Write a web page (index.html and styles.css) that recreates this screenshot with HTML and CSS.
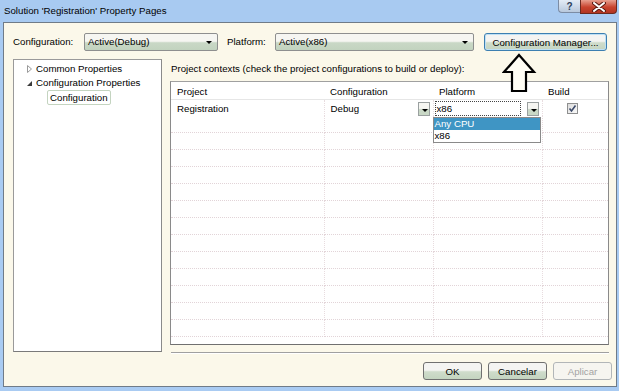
FILE: index.html
```html
<!DOCTYPE html>
<html>
<head>
    <title>Solution 'Registration' Property Pages</title>
    <link rel="stylesheet" href="styles.css">
</head>
<body>
<div class="window">
    <div class="titlebar">
        <span class="title">Solution 'Registration' Property Pages</span>
        <div class="caption-btns">
            <span class="cap help">?</span>
            <span class="cap close">
                <svg width="14" height="10" viewBox="0 0 14 10">
                    <path d="M2 1 L12 9 M12 1 L2 9" stroke="#5a1a12" stroke-width="4" stroke-linecap="round"/>
                    <path d="M2 1 L12 9 M12 1 L2 9" stroke="#fff" stroke-width="2" stroke-linecap="round"/>
                </svg>
            </span>
        </div>
    </div>

    <div class="client">
        <div class="toolbar">
            <span class="lbl lbl-config">Configuration:</span>
            <div class="combo combo-config">Active(Debug)<span class="caret"></span></div>
            <span class="lbl lbl-platform">Platform:</span>
            <div class="combo combo-platform">Active(x86)<span class="caret"></span></div>
            <button type="button" class="btn btn-manager">Configuration Manager...</button>
        </div>

        <div class="main">
            <div class="tree">
                <div class="node">
                    <span class="tw"><svg width="5" height="8" viewBox="0 0 5 8"><path d="M0.5 0.5 L4.5 4 L0.5 7.5 Z" fill="#fff" stroke="#9a9a9a" stroke-width="1"/></svg></span>Common Properties
                </div>
                <div class="node">
                    <span class="tw"><svg width="5" height="5" viewBox="0 0 5 5"><path d="M5 0 L5 5 L0 5 Z" fill="#3a3a3a"/></svg></span>Configuration Properties
                </div>
                <div class="node child"><span class="sel">Configuration</span></div>
            </div>

            <div class="pane">
                <div class="caption">Project contexts (check the project configurations to build or deploy):</div>
                <div class="grid-box">
                    <table class="grid">
                        <tr class="head">
                            <th class="c-proj">Project</th>
                            <th class="c-conf">Configuration</th>
                            <th class="c-plat">Platform</th>
                            <th class="c-build">Build</th>
                        </tr>
                        <tr class="edit">
                            <td>Registration</td>
                            <td><div class="cell-combo">Debug<span class="drop-btn"></span></div></td>
                            <td class="plat-cell">
                                <div class="cell-combo"><span class="focus-box">x86</span><span class="drop-btn"></span></div>
                                <div class="drop-list">
                                    <div class="opt active">Any CPU</div>
                                    <div class="opt">x86</div>
                                </div>
                            </td>
                            <td class="build-cell"><span class="check">
                                <svg width="9" height="9" viewBox="0 0 9 9"><path d="M1.5 4.5 L3.5 7 L7.5 1.5" fill="none" stroke="#3c4a6a" stroke-width="1.6"/></svg>
                            </span></td>
                        </tr>
                        <tr><td></td><td></td><td></td><td></td></tr>
                        <tr><td></td><td></td><td></td><td></td></tr>
                        <tr><td></td><td></td><td></td><td></td></tr>
                        <tr><td></td><td></td><td></td><td></td></tr>
                        <tr><td></td><td></td><td></td><td></td></tr>
                        <tr><td></td><td></td><td></td><td></td></tr>
                        <tr><td></td><td></td><td></td><td></td></tr>
                        <tr><td></td><td></td><td></td><td></td></tr>
                        <tr><td></td><td></td><td></td><td></td></tr>
                        <tr><td></td><td></td><td></td><td></td></tr>
                        <tr><td></td><td></td><td></td><td></td></tr>
                        <tr><td></td><td></td><td></td><td></td></tr>
                        <tr><td></td><td></td><td></td><td></td></tr>
                    </table>
                </div>
                <div class="sep"></div>
            </div>
        </div>

        <div class="footer">
            <button type="button" class="btn btn-dlg">OK</button>
            <button type="button" class="btn btn-dlg">Cancelar</button>
            <button type="button" class="btn btn-dlg disabled">Aplicar</button>
        </div>

        <svg class="pointer" width="36" height="42" viewBox="0 0 36 42">
            <path d="M17 2 L32 19 L24 19 L24 38 L10 38 L10 19 L2 19 Z" fill="#fffdf4" stroke="#000" stroke-width="2.2" stroke-linejoin="miter"/>
        </svg>
    </div>
</div>
</body>
</html>
```

FILE: styles.css
```css
body { margin: 0; background: #a9cbf2; font-family: "Liberation Sans", Arial, sans-serif; font-size: 9.7px; color: #000; }
.window { width: 619px; height: 391px; display: flex; flex-direction: column; }

/* title bar */
.titlebar { height: 22px; display: flex; justify-content: space-between; align-items: flex-start; background: #a8caf1; }
.title { padding: 5px 0 0 4px; line-height: 12px; }
.caption-btns { display: flex; margin-right: 2px; }
.cap { display: flex; align-items: center; justify-content: center; box-sizing: border-box; }
.help { width: 22px; height: 13px; border: 1px solid #7c8ca4; border-top: none; border-right: none; border-radius: 0 0 0 4px; background: linear-gradient(#e4ecf6, #b8c8dc); color: #2c3e5a; font-weight: bold; font-size: 10px; }
.close { width: 37px; height: 14px; border: 1px solid #6b2a20; border-top: none; border-radius: 0 0 4px 0; background: linear-gradient(#e8a090, #c8432e 55%, #b23522); }

/* client area */
.client { flex: 1; margin: 0 2px 4px 3px; border: 1px solid #6f7b88; background: #fbf8ea; position: relative; }

.toolbar { display: flex; align-items: center; height: 18px; padding: 10px 0 0 9px; }
.lbl { line-height: 18px; }
.lbl-config { width: 71px; }
.lbl-platform { width: 48px; margin-left: 9px; }
.combo { position: relative; box-sizing: border-box; height: 18px; line-height: 16px; padding-left: 3px; border: 1px solid #8e8f8f; border-radius: 2px; background: linear-gradient(#f6f6f2 45%, #c9d8c6 55%, #c2d3bf); }
.combo-config { width: 134px; }
.combo-platform { width: 199px; }
.caret { position: absolute; right: 5px; top: 7px; border-left: 3px solid transparent; border-right: 3px solid transparent; border-top: 3px solid #000; }

.btn { font-family: inherit; font-size: 9.7px; color: #000; box-sizing: border-box; height: 18px; padding: 0; border: 1px solid #707070; border-radius: 3px; background: linear-gradient(#f4f4f2 45%, #cfdccb 55%, #c4d4c0); }
.btn-manager { width: 123px; margin-left: 10px; border-color: #3c7fb1; box-shadow: inset 0 0 0 1px #bfe0f4; }

.main { display: flex; margin-top: 8px; }
.tree { box-sizing: border-box; width: 149px; height: 293px; margin-left: 9px; border: 1px solid #828790; border-color: #9a9a9a #8a8a8a #7a7a7a #9a9a9a; background: #fff; padding-top: 2px; }
.node { height: 14px; line-height: 14px; display: flex; align-items: center; padding-left: 11px; }
.tw { width: 9px; margin-right: 2px; display: inline-flex; justify-content: center; align-items: center; }
.child { padding-left: 33px; height: 15px; }
.sel { border: 1px solid #c4d4c0; border-radius: 2px; padding: 0 2px; line-height: 13px; }

.pane { margin-left: 8px; width: 439px; }
.caption { height: 22px; line-height: 20px; padding-left: 1px; }
.grid-box { box-sizing: border-box; height: 264px; border: 1px solid #828282; border-color: #a0a0a0 #8a8a8a #707070 #8a8a8a; background: #fff; overflow: visible; }
.grid { border-collapse: collapse; width: 100%; font-size: 9.7px; }
.grid th, .grid td { padding: 1px 0 0 6px; text-align: left; font-weight: normal; height: 15px; border-right: 1px dotted #e8dcdf; border-bottom: 1px dotted #e2d4d8; }
.grid th { height: 16px; border-bottom: 1px solid #e6e6e6; border-right: none; }
.grid tr > :last-child { border-right: none; }
.grid .edit td { border-bottom: none; }
.c-proj { width: 147px; }
.c-conf { width: 103px; }
.c-plat { width: 103px; }

.cell-combo { display: flex; align-items: center; justify-content: space-between; padding-right: 3px; }
.drop-btn { position: relative; box-sizing: border-box; width: 12px; height: 14px; border: 1px solid #9aa0a0; background: linear-gradient(#f6f6f2 45%, #c9d8c6 55%); }
.drop-btn::after { content: ""; position: absolute; left: 3px; top: 6px; border-left: 3px solid transparent; border-right: 3px solid transparent; border-top: 3px solid #000; }
.plat-cell { position: relative; padding-left: 1px !important; }
.focus-box { box-sizing: border-box; width: 86px; height: 15px; line-height: 13px; border: 1px dotted #444; padding-left: 1px; }
.drop-list { position: absolute; left: -1px; top: 17px; width: 108px; box-sizing: border-box; border: 1px solid #8a8a8a; background: #fff; z-index: 2; }
.opt { height: 12px; line-height: 12px; padding-left: 1px; }
.opt.active { background: #3f95c4; color: #fff; }
.build-cell { padding-left: 24px !important; }
.check { display: flex; align-items: center; justify-content: center; box-sizing: border-box; width: 11px; height: 11px; border: 1px solid #8e8f8f; background: linear-gradient(135deg, #dcdcdc, #fafafa); }

.sep { margin-top: 7px; margin-left: 1px; border-top: 1px solid #a0a0a0; border-bottom: 1px solid #fff; }

.footer { display: flex; justify-content: flex-end; gap: 6px; padding: 8px 4px 0 0; }
.btn-dlg { width: 59px; }
.btn-dlg.disabled { color: #a3a3a3; border-color: #b2b6b8; background: #f6f5f0; }

.pointer { position: absolute; left: 498px; top: 30px; }
```
